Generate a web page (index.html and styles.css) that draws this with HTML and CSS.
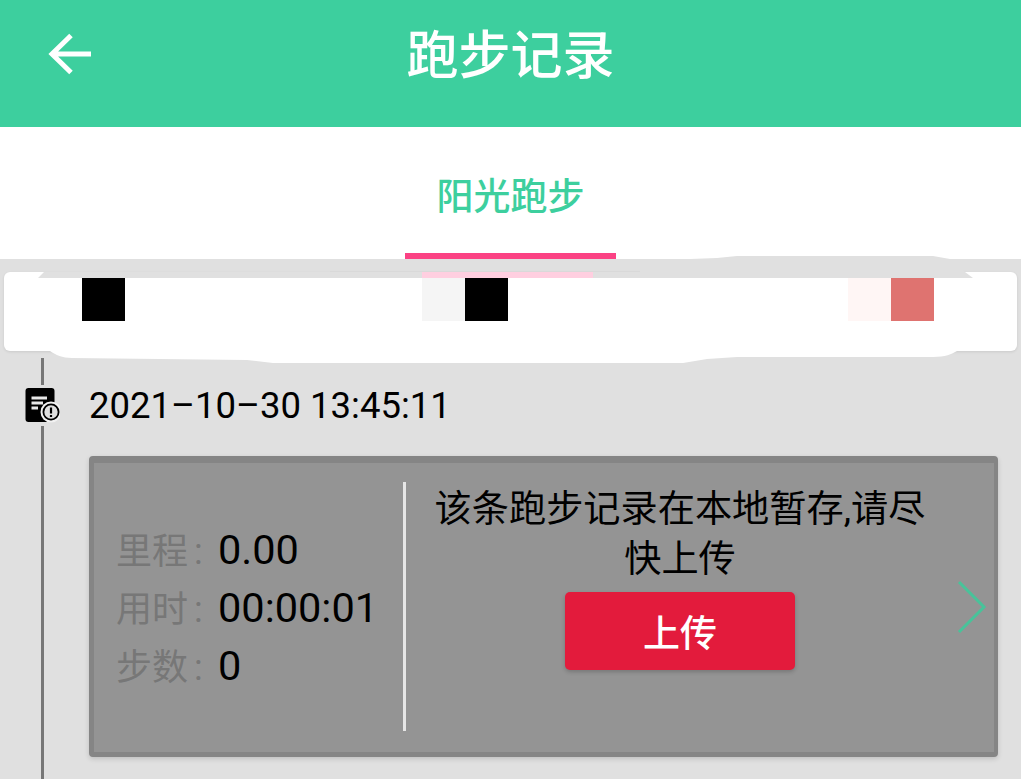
FILE: index.html
```html
<!DOCTYPE html>
<html lang="zh-CN">
<head>
<meta charset="utf-8">
<title>跑步记录</title>
<link rel="stylesheet" href="styles.css">
</head>
<body>
<div class="app">
  <header class="topbar">
    <button class="back" aria-label="返回">
      <svg width="44" height="42" viewBox="0 0 44 42"><path d="M4 21H43M23 2.5L4 21L23 39.5" fill="none" stroke="#fff" stroke-width="5"/></svg>
    </button>
    <h1 class="title">跑步记录</h1>
  </header>
  <nav class="tabs"><a class="tab">阳光跑步</a></nav>
  <main class="content">
    <section class="summary">
      <span class="mask sq sq-a"></span>
      <span class="mask sq sq-b"></span>
      <span class="mask sq sq-c"></span>
      <span class="mask sq sq-d"></span>
      <span class="mask sq sq-e"></span>
    </section>
    <section class="record">
      <div class="rail">
        <span class="seg seg-top"></span>
        <svg class="rail-icon" width="35" height="35" viewBox="0 0 35 35">
          <rect x="0.5" y="0" width="29" height="34" rx="3" fill="#000"/>
          <path d="M6.5 10H22M6.5 15H18M6.5 20H13" stroke="#e8e8e8" stroke-width="2.8" fill="none"/>
          <circle cx="26" cy="24" r="10.5" fill="#f2f2f2"/>
          <circle cx="26" cy="24" r="7.6" fill="#e0e0e0" stroke="#000" stroke-width="1.8"/>
          <path d="M26 19.5V25.5M26 27V29" stroke="#000" stroke-width="2.2" fill="none"/>
        </svg>
        <span class="seg seg-bottom"></span>
      </div>
      <div class="entry">
        <div class="date">2021–10–30 13:45:11</div>
        <article class="card">
          <div class="stats">
            <div class="stat"><span class="label">里程 :</span><span class="value">0.00</span></div>
            <div class="stat"><span class="label">用时 :</span><span class="value">00:00:01</span></div>
            <div class="stat"><span class="label">步数 :</span><span class="value">0</span></div>
          </div>
          <div class="divider"></div>
          <div class="notice">
            <p class="notice-text">该条跑步记录在本地暂存,请尽快上传</p>
            <button class="upload">上传</button>
          </div>
          <svg class="chevron" width="30" height="54" viewBox="0 0 30 54"><path d="M2 2L27 27L2 52" fill="none" stroke="#48c39a" stroke-width="3"/></svg>
        </article>
      </div>
    </section>
  </main>
  <svg class="scribble" width="1021" height="120" viewBox="0 250 1021 120">
    <path d="M50 351C56 355 62 358 72 358L247 360L273 363L683 363L707 359L737 357L933 357C945 357 952 354 957 351L957 340L50 340Z" fill="#fff"/>
    <path d="M38 278L44 272L640 272L640 264L690 259L717 258L737 256L933 256L950 259L965 272L973 278Z" fill="#e0e0e0"/>
    <path d="M330 271.5H640" stroke="#d9d9d9" stroke-width="1"/>
  </svg>
  <span class="strip-top"></span>
</div>
</body>
</html>
```

FILE: styles.css
```css
* { box-sizing: border-box; }
html, body { margin: 0; padding: 0; }
body {
  font-family: Roboto, "Noto Sans CJK SC", sans-serif;
  background: #e0e0e0;
  overflow: hidden;
}
.app {
  position: relative;
  width: 1021px;
  height: 779px;
  display: flex;
  flex-direction: column;
  overflow: hidden;
}
.topbar {
  height: 127px;
  flex: none;
  background: #3dcf9e;
  display: flex;
  align-items: center;
  justify-content: center;
  position: relative;
}
.back {
  position: absolute;
  left: 48px;
  top: 33px;
  padding: 0;
  border: 0;
  background: none;
  line-height: 0;
}
.title {
  margin: 0 0 13px;
  color: #fff;
  font-size: 52px;
  font-weight: 500;
  line-height: 60px;
}
.tabs {
  height: 132px;
  flex: none;
  background: #fff;
  display: flex;
  justify-content: center;
}
.tab {
  width: 211px;
  height: 132px;
  border-bottom: 6px solid #fb4284;
  color: #3dcf9e;
  font-size: 37px;
  font-weight: 500;
  text-align: center;
  line-height: 141px;
}
.content {
  flex: 1;
  min-height: 0;
  background: #e0e0e0;
  display: flex;
  flex-direction: column;
}
.summary {
  flex: none;
  position: relative;
  z-index: 2;
  height: 79px;
  margin: 13px 4px 0;
  background: #fff;
  border-radius: 6px;
  box-shadow: 0 1px 3px rgba(0, 0, 0, .1);
}
.mask { position: absolute; z-index: 3; }
.sq { top: 6px; width: 43px; height: 43px; }
.sq-a { left: 78px; background: #000; }
.sq-b { left: 418px; background: #f5f5f5; }
.sq-c { left: 461px; background: #000; }
.sq-d { left: 844px; background: #fff6f5; }
.sq-e { left: 887px; background: #df7370; }
.scribble {
  position: absolute;
  left: 0;
  top: 250px;
  z-index: 2;
  pointer-events: none;
}
.strip-top {
  position: absolute;
  z-index: 3;
  left: 422px;
  top: 272px;
  width: 171px;
  height: 6px;
  background: #ffcfe0;
}
.record {
  flex: 1;
  min-height: 0;
  margin-top: 7px;
  display: flex;
  padding-right: 23px;
}
.rail {
  flex: none;
  width: 85px;
  margin-right: 4px;
  display: flex;
  flex-direction: column;
  align-items: center;
}
.seg { width: 3px; background: #777; display: block; }
.seg-top { height: 27px; flex: none; }
.seg-bottom { flex: 1; }
.rail-icon { flex: none; margin: 3px 0; }
.entry { flex: 1; min-width: 0; padding-top: 27px; }
.date {
  height: 42px;
  line-height: 42px;
  font-size: 36.5px;
  color: #000;
  margin-bottom: 29px;
}
.card {
  height: 301px;
  background: #949494;
  border: solid #858585;
  border-width: 7px 4px 5px 5px;
  border-radius: 4px;
  box-shadow: 0 2px 5px rgba(0, 0, 0, .15);
  display: flex;
  position: relative;
}
.stats {
  flex: none;
  width: 309px;
  padding-left: 22px;
  display: flex;
  flex-direction: column;
  justify-content: center;
}
.stat {
  height: 58px;
  line-height: 58px;
  font-size: 36px;
  display: flex;
  align-items: baseline;
}
.label { color: #777; width: 102px; flex: none; word-spacing: -3px; }
.value { color: #000; font-size: 41.5px; }
.divider {
  flex: none;
  width: 3px;
  margin: 19px 0 21px;
  background: #e6e6e6;
}
.notice {
  flex: none;
  width: 548px;
  padding: 21px 20px 0;
  display: flex;
  flex-direction: column;
  align-items: center;
}
.notice-text {
  margin: 0;
  font-size: 37.2px;
  line-height: 50px;
  color: #000;
  text-align: center;
}
.upload {
  margin-top: 8px;
  width: 230px;
  height: 78px;
  border: 0;
  border-radius: 5px;
  background: #e31b3c;
  color: #fff;
  font-family: inherit;
  font-size: 37px;
  font-weight: 500;
  box-shadow: 0 2px 4px rgba(0, 0, 0, .2);
}
.chevron { flex: none; margin: 117px 0 0 3px; }
```
